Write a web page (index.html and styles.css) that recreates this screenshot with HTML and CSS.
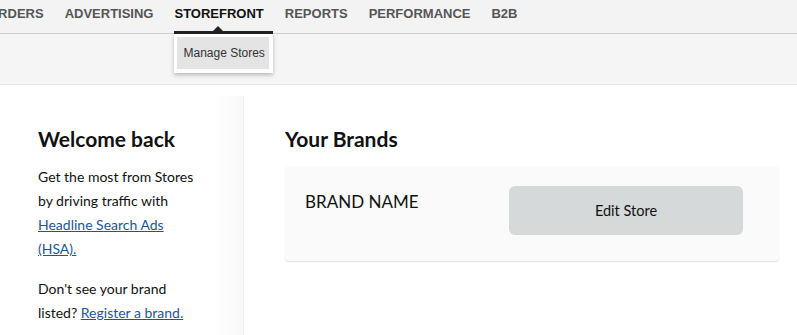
FILE: index.html
```html
<!DOCTYPE html>
<html>
<head>
<meta charset="utf-8">
<link rel="stylesheet" href="styles.css">
</head>
<body>
<header class="topnav">
  <nav class="nav-items">
    <a class="nav-item">ORDERS</a>
    <a class="nav-item">ADVERTISING</a>
    <div class="nav-item active">
      STOREFRONT
      <span class="active-bar"></span>
      <div class="dropdown">
        <a class="dropdown-item">Manage Stores</a>
      </div>
    </div>
    <a class="nav-item">REPORTS</a>
    <a class="nav-item">PERFORMANCE</a>
    <a class="nav-item">B2B</a>
  </nav>
</header>
<div class="subband"></div>
<main class="page">
  <aside class="sidebar">
    <h2 class="title">Welcome back</h2>
    <p class="text">Get the most from Stores by driving traffic with <a class="link" href="#">Headline Search Ads (HSA).</a></p>
    <p class="text">Don't see your brand listed? <a class="link" href="#">Register a brand.</a></p>
  </aside>
  <section class="content">
    <h2 class="title">Your Brands</h2>
    <div class="card">
      <div class="brand-name">BRAND NAME</div>
      <button class="edit-btn">Edit Store</button>
    </div>
  </section>
</main>
</body>
</html>
```

FILE: styles.css
```css
* { box-sizing: border-box; }
html, body { margin: 0; padding: 0; background: #fff; }
body { width: 797px; height: 335px; overflow: hidden; font-family: Lato, "Liberation Sans", sans-serif; color: #111; }

.topnav {
  height: 34px;
  background: #f3f3f3;
  border-bottom: 1px solid #cfcfcf;
}
.nav-items {
  display: flex;
  gap: 21px;
  margin-left: -12px;
  height: 33px;
}
.nav-item {
  position: relative;
  font-family: "Liberation Sans", Arial, sans-serif;
  font-weight: bold;
  font-size: 13px;
  line-height: 15px;
  padding-top: 6px;
  color: #555;
  text-decoration: none;
  white-space: nowrap;
}
.nav-item.active { color: #111; }
.active-bar {
  position: absolute;
  left: 0;
  top: 31px;
  width: 99px;
  height: 3px;
  background: #222;
}
.active-bar::before {
  content: "";
  position: absolute;
  left: 39px;
  top: -5px;
  border-left: 5px solid transparent;
  border-right: 5px solid transparent;
  border-bottom: 5px solid #222;
}
.dropdown {
  position: absolute;
  left: 0;
  top: 34px;
  width: 99px;
  padding: 3px 4px 4px 3px;
  background: #fff;
  box-shadow: 0 2px 4px rgba(0,0,0,0.25);
  z-index: 2;
}
.dropdown-item {
  display: block;
  height: 32px;
  padding: 9px 0 0 6px;
  background: #e4e4e4;
  font-family: "Liberation Sans", Arial, sans-serif;
  font-weight: normal;
  font-size: 12px;
  line-height: 14px;
  color: #333;
}

.subband {
  height: 51px;
  background: #f5f5f5;
  border-bottom: 1px solid #e6e6e6;
}

.page {
  display: flex;
  height: 250px;
  padding-top: 11px;
}
.sidebar {
  width: 244px;
  flex: 0 0 244px;
  padding: 31px 0 0 38px;
  background: linear-gradient(to right, #fff 0, #fff 88%, #f8f8f8 100%);
  border-right: 1px solid #efefef;
}
.sidebar .text { width: 166px; }
.title {
  margin: 0;
  font-size: 21px;
  line-height: 24px;
  font-weight: bold;
  color: #111;
}
.text {
  margin: 14px 0 0;
  font-size: 14px;
  line-height: 24px;
  color: #111;
}
.text + .text { margin-top: 16px; }
.link { color: #1f5592; text-decoration: underline; }

.content {
  flex: 1;
  padding: 31px 18px 0 41px;
}
.card {
  display: flex;
  align-items: flex-start;
  margin-top: 15px;
  padding: 20px 36px 26px 20px;
  background: #fafafa;
  border-radius: 4px;
  box-shadow: 0 1px 1px rgba(0,0,0,0.12);
}
.brand-name {
  flex: 0 0 204px;
  font-size: 17px;
  line-height: 20px;
  padding-top: 6px;
  color: #111;
}
.edit-btn {
  width: 234px;
  height: 49px;
  border: none;
  border-radius: 6px;
  background: #d5d9d9;
  font-family: Lato, "Liberation Sans", sans-serif;
  font-size: 14.5px;
  color: #111;
  padding: 0;
}
```
